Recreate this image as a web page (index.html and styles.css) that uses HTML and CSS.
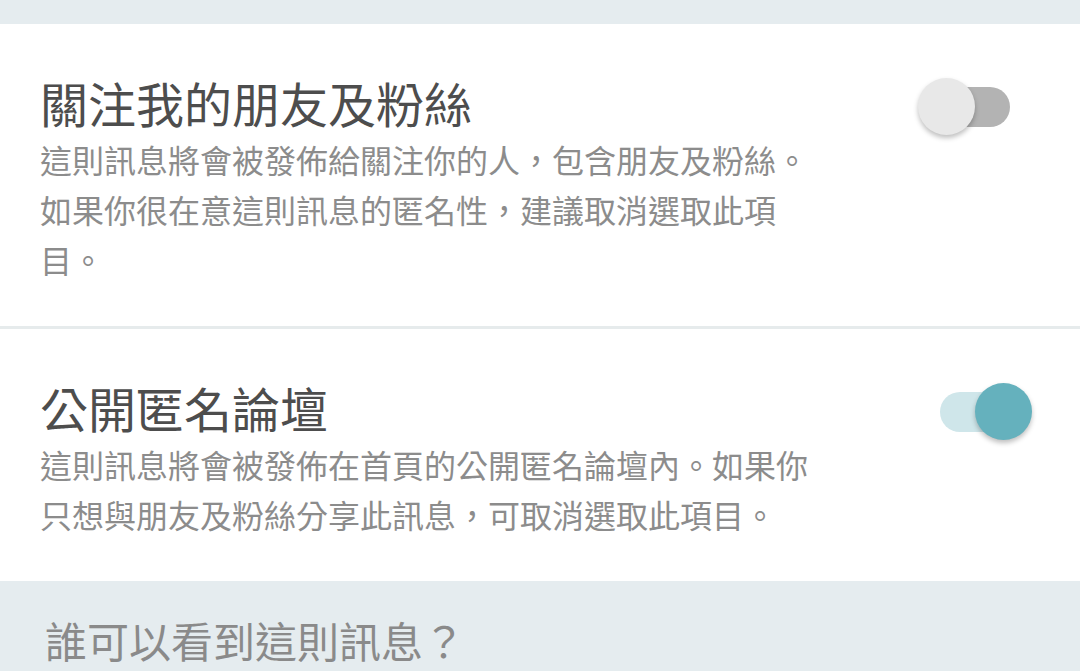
FILE: index.html
```html
<!DOCTYPE html>
<html lang="zh-Hant">
<head>
<meta charset="utf-8">
<title>分享設定</title>
<link rel="stylesheet" href="styles.css">
</head>
<body>
<div class="page">
  <div class="top-gap"></div>
  <section class="option">
    <div class="option-head">
      <h2 class="option-title">關注我的朋友及粉絲</h2>
      <div class="switch switch-off"><span class="thumb"></span></div>
    </div>
    <p class="option-desc">這則訊息將會被發佈給關注你的人，包含朋友及粉絲。如果你很在意這則訊息的匿名性，建議取消選取此項目。</p>
  </section>
  <div class="divider"></div>
  <section class="option">
    <div class="option-head">
      <h2 class="option-title">公開匿名論壇</h2>
      <div class="switch switch-on"><span class="thumb"></span></div>
    </div>
    <p class="option-desc">這則訊息將會被發佈在首頁的公開匿名論壇內。如果你只想與朋友及粉絲分享此訊息，可取消選取此項目。</p>
  </section>
  <div class="section-label">誰可以看到這則訊息？</div>
</div>
</body>
</html>
```

FILE: styles.css
```css
html, body {
  margin: 0;
  padding: 0;
}
body {
  background: #e5ecef;
  font-family: "Noto Sans CJK TC", "Noto Sans", sans-serif;
  font-weight: 400;
  width: 1080px;
  height: 671px;
  overflow: hidden;
}
.page {
  display: flex;
  flex-direction: column;
}
.top-gap {
  height: 24px;
}
.option {
  background: #ffffff;
  padding: 48px 70px 42px 40px;
}
.divider {
  height: 3px;
  background: #e6ebec;
}
.option-head {
  display: flex;
  align-items: center;
  justify-content: space-between;
}
.option-title {
  margin: 0 0 2px 0;
  font-size: 48px;
  line-height: 60px;
  font-weight: 400;
  color: #4d4d4d;
}
.option-desc {
  margin: 0;
  max-width: 780px;
  font-size: 32px;
  line-height: 50px;
  font-weight: 400;
  color: #8c8c8c;
}
.switch {
  position: relative;
  width: 70px;
  height: 40px;
  border-radius: 20px;
  margin-top: 8px;
  flex: none;
}
.switch-off {
  background: #b3b3b3;
}
.switch-on {
  background: #cfe6ea;
}
.thumb {
  position: absolute;
  top: -9px;
  width: 57px;
  height: 57px;
  border-radius: 50%;
  box-shadow: 0 3px 5px rgba(0, 0, 0, 0.25);
}
.switch-off .thumb {
  left: -22px;
  background: #e8e8e8;
}
.switch-on .thumb {
  left: 35px;
  background: #65b1bd;
}
.section-label {
  padding: 34px 0 0 45px;
  font-size: 42px;
  line-height: 50px;
  font-weight: 400;
  color: #8a8a8a;
  height: 55px;
}
```
